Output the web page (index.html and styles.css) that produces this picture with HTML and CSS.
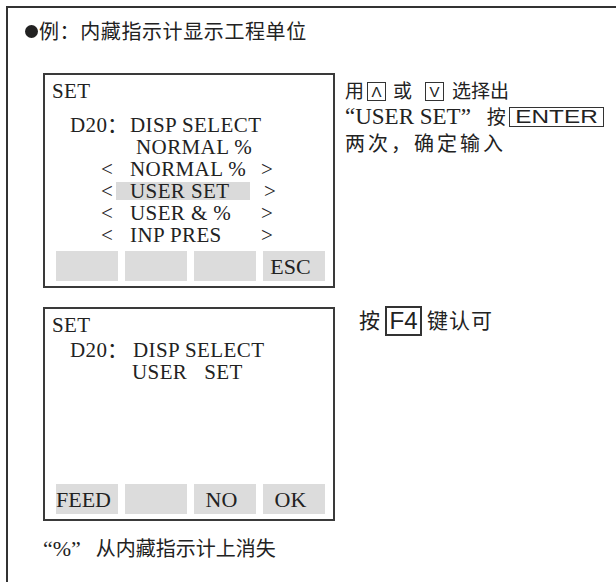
FILE: index.html
```html
<!DOCTYPE html>
<html lang="zh-CN">
<head>
    <meta charset="UTF-8">
    <meta name="viewport" content="width=device-width, initial-scale=1.0">
    <title>内藏指示计显示工程单位</title>
    <link rel="stylesheet" href="styles.css">
</head>
<body>
    <div class="sheet">
        <h1 class="title"><span class="dot"></span>例：内藏指示计显示工程单位</h1>

        <div class="step">
            <div class="screen">
                <div class="ln">SET</div>
                <div class="ln ln-param gap-big"><span class="pid">D20：</span>DISP SELECT</div>
                <div class="ln ln-cur">NORMAL %</div>
                <ul class="opts">
                    <li><span class="lt">&lt;</span><span class="opt">NORMAL %</span><span class="gt">&gt;</span></li>
                    <li class="sel"><span class="lt">&lt;</span><span class="opt">USER SET</span><span class="gt gt-far">&gt;</span></li>
                    <li><span class="lt">&lt;</span><span class="opt">USER &amp; %</span><span class="gt">&gt;</span></li>
                    <li><span class="lt">&lt;</span><span class="opt">INP PRES</span><span class="gt">&gt;</span></li>
                </ul>
                <div class="keys">
                    <span class="key"></span>
                    <span class="key"></span>
                    <span class="key"></span>
                    <span class="key">ESC</span>
                </div>
            </div>
            <div class="note">
                <div class="note-ln">用<span class="kb kb-up">Λ</span>或<span class="kb kb-down">V</span>选择出</div>
                <div class="note-ln"><span class="latin">“USER SET”</span>按<span class="kb kb-enter"><span class="wide">ENTER</span></span></div>
                <div class="note-ln spaced">两次，确定输入</div>
            </div>
        </div>

        <div class="step step-second">
            <div class="screen screen-short">
                <div class="ln">SET</div>
                <div class="ln ln-param"><span class="pid pid-wide">D20：</span>DISP SELECT</div>
                <div class="ln ln-val">USER<span class="word">SET</span></div>
                <div class="keys">
                    <span class="key">FEED</span>
                    <span class="key"></span>
                    <span class="key">NO</span>
                    <span class="key">OK</span>
                </div>
            </div>
            <div class="note note-big">
                <div class="note-ln">按<span class="kb kb-f">F4</span><span class="tight">键认可</span></div>
            </div>
        </div>

        <p class="result"><span class="latin quote">“%”</span>从内藏指示计上消失</p>
    </div>
</body>
</html>
```

FILE: styles.css
```css
body {
    margin: 0;
    background-color: #fff;
    color: #222;
    font-family: "Noto Sans CJK SC", "Noto Sans", sans-serif;
    overflow: hidden;
}
.sheet {
    margin: 6px 0 0 6px;
    height: 600px;
    border-top: 2px solid #333;
    border-left: 2px solid #333;
}
.title {
    display: flex;
    align-items: center;
    margin: 11px 0 0 17px;
    font-size: 20px;
    font-weight: normal;
    line-height: 24px;
    letter-spacing: 0.6px;
}
.dot {
    width: 13px;
    height: 13px;
    margin-right: 1px;
    border-radius: 50%;
    background-color: #222;
}
.step {
    display: flex;
    align-items: flex-start;
    margin: 30px 0 0 35px;
}
.step-second {
    margin-top: 19px;
}

/* LCD screens */
.screen {
    display: flex;
    flex-direction: column;
    width: 292px;
    height: 215px;
    box-sizing: border-box;
    padding: 5px 8px 5px 7px;
    border: 2px solid #3a3a3a;
    font-family: "Liberation Serif", serif;
    font-size: 21px;
    line-height: 22px;
    letter-spacing: 0.4px;
}
.screen-short {
    height: 214px;
}
.ln {
    height: 22px;
    white-space: nowrap;
}
.ln-param {
    margin-top: 3px;
    padding-left: 18px;
}
.gap-big {
    margin-top: 12px;
}
.pid {
    display: inline-block;
    width: 60px;
}
.pid-wide {
    width: 63px;
}
.ln-cur {
    padding-left: 84px;
}
.ln-val {
    padding-left: 80px;
}
.word {
    margin-left: 17px;
}
.opts {
    margin: 0;
    padding: 0;
    list-style: none;
}
.opts li {
    display: flex;
    align-items: center;
    height: 22px;
    padding-left: 49px;
}
.lt {
    width: 15px;
}
.opt {
    width: 134px;
    height: 18px;
    box-sizing: border-box;
    padding-left: 14px;
    line-height: 19px;
    white-space: nowrap;
}
.sel .opt {
    background-color: #dadada;
}
.gt {
    margin-left: 11px;
}
.gt-far {
    margin-left: 14px;
}
.keys {
    display: flex;
    gap: 7px;
    margin: auto 0 0 4px;
}
.key {
    width: 62px;
    height: 30px;
    box-sizing: border-box;
    padding-right: 7px;
    background-color: #dcdcdc;
    font-size: 22px;
    line-height: 31px;
    letter-spacing: 0;
    text-align: center;
}

/* side notes */
.note {
    margin: 4px 0 0 10px;
    font-size: 19px;
    line-height: 26px;
    white-space: nowrap;
}
.note-big {
    margin: -3px 0 0 24px;
    font-size: 21px;
    line-height: 30px;
}
.spaced {
    font-size: 20px;
    letter-spacing: 3px;
}
.tight {
    letter-spacing: 1px;
}
.latin {
    font-family: "Liberation Serif", serif;
}
.note .latin {
    margin-right: 16px;
    font-size: 23px;
}
.kb {
    display: inline-flex;
    align-items: center;
    justify-content: center;
    box-sizing: border-box;
    border: 1.5px solid #333;
    font-family: "Liberation Sans", Arial, sans-serif;
    line-height: 1;
    vertical-align: middle;
}
.kb-up,
.kb-down {
    width: 19px;
    height: 19px;
    font-size: 15px;
    font-weight: 300;
}
.kb-up {
    margin: -3px 7px 0 3px;
}
.kb-down {
    margin: -3px 8px 0 13px;
}
.kb-enter {
    width: 95px;
    height: 20px;
    margin: -3px 0 0 3px;
    font-size: 18px;
}
.wide {
    display: inline-block;
    transform: scaleX(1.35);
}
.kb-f {
    width: 37px;
    height: 30px;
    margin: -3px 5px 0 5px;
    border-width: 2px;
    font-size: 24px;
}
.result {
    margin: 14px 0 0 35px;
    font-size: 20px;
    line-height: 26px;
}
.result .quote {
    margin-right: 15px;
    font-size: 22px;
}
```
